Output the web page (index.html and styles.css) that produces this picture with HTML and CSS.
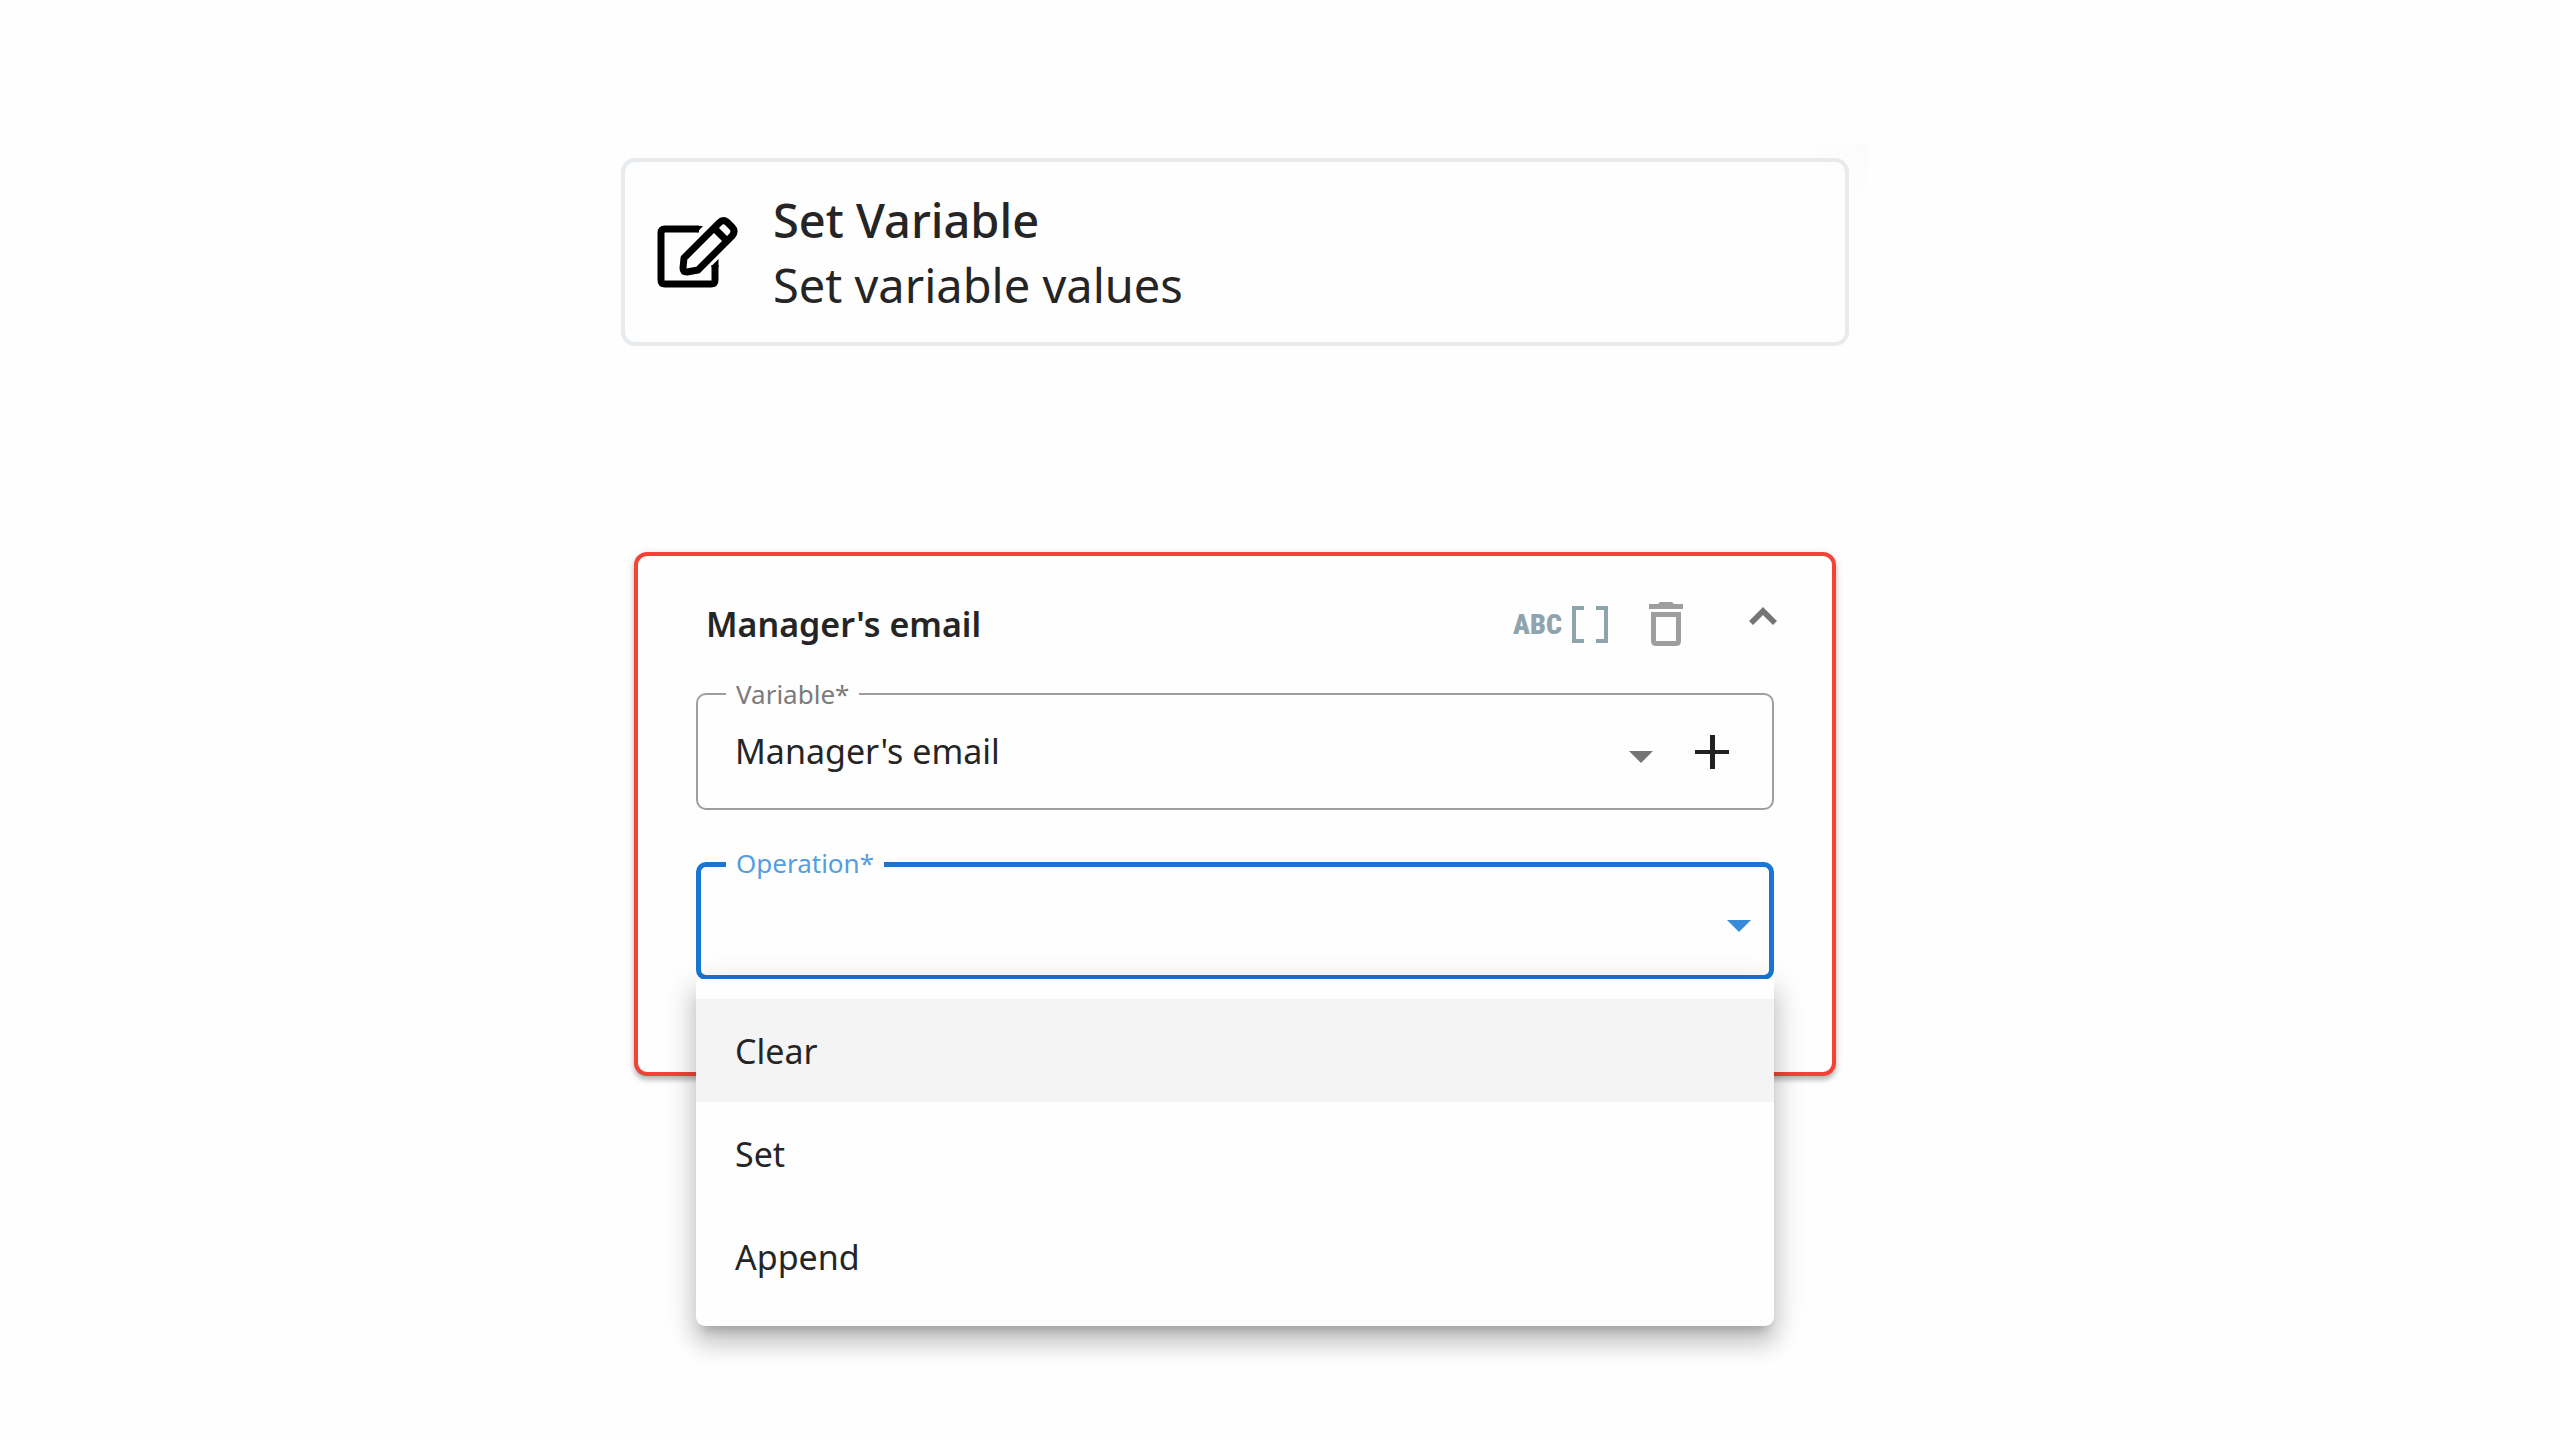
FILE: index.html
```html
<!DOCTYPE html>
<html lang="en">
<head>
    <meta charset="UTF-8">
    <meta name="viewport" content="width=device-width, initial-scale=1">
    <title>Set Variable</title>
    <link rel="stylesheet" href="styles.css">
</head>
<body>
    <main class="page">
        <section class="activity-card">
            <svg class="activity-icon" viewBox="0 0 80 72" aria-hidden="true">
                <path d="M42 12H8Q4 12 4 16V63Q4 67 8 67H54Q58 67 58 63V48" />
                <path class="cut" d="M41 9H46L40 15.500H41ZM54.500 50V49L61.500 42V50Z" />
                <path d="M27 41L62 6Q66 2 70 5L75 10Q79 14 75 19L41 53L30 55Q26 55 26 51Z" />
                <path d="M57 11L69 23" />
            </svg>
            <div class="activity-text">
                <h1>Set Variable</h1>
                <p>Set variable values</p>
            </div>
        </section>

        <form class="variable-card">
            <div class="card-header">
                <h2>Manager's email</h2>
                <span class="type-text">ABC</span>
                <svg class="icon-brackets" viewBox="0 0 36 37" aria-hidden="true">
                    <path d="M12 2H2V35H12M24 2H34V35H24" />
                </svg>
                <button type="button" class="icon-btn delete-btn" aria-label="Delete">
                    <svg width="34" height="44" viewBox="0 0 34 44" aria-hidden="true">
                        <path fill-rule="evenodd" d="M0 2H9L11 0H23L25 2H34V7H0ZM2 10H32V39Q32 44 27 44H7Q2 44 2 39ZM7 15V39H27V15Z" />
                    </svg>
                </button>
                <button type="button" class="icon-btn collapse-btn" aria-label="Collapse">
                    <svg width="28" height="18" viewBox="0 0 28 18" aria-hidden="true">
                        <path d="M14 0L28 14L24 18L14 8L4 18L0 14Z" />
                    </svg>
                </button>
            </div>

            <div class="field">
                <label for="variable">Variable<span>*</span></label>
                <select id="variable" required>
                    <option>Manager's email</option>
                </select>
                <svg class="arrow" width="24" height="12" viewBox="0 0 24 12" aria-hidden="true">
                    <path d="M0 0H24L12 12Z" />
                </svg>
                <button type="button" class="icon-btn add-btn" aria-label="Add variable">
                    <svg width="34" height="34" viewBox="0 0 34 34" aria-hidden="true">
                        <path d="M15 0H20V15H34V19H20V34H15V19H0V15H15Z" />
                    </svg>
                </button>
            </div>

            <div class="field active">
                <label for="operation">Operation<span>*</span></label>
                <select id="operation" required>
                    <option value=""></option>
                </select>
                <svg class="arrow" width="24" height="12" viewBox="0 0 24 12" aria-hidden="true">
                    <path d="M0 0H24L12 12Z" />
                </svg>

                <!-- open dropdown -->
                <div class="menu" role="listbox" aria-label="Operation">
                    <button type="button" class="selected" role="option">Clear</button>
                    <button type="button" role="option">Set</button>
                    <button type="button" role="option">Append</button>
                </div>
            </div>
        </form>
    </main>
</body>
</html>
```

FILE: styles.css
```css
* {
    box-sizing: border-box;
}

body {
    margin: 0;
    min-height: 100vh;
    padding: 158px 90px 0 0;
    background: #fefefe;
    color: #252525;
    font-family: "Noto Sans", sans-serif;
}

h1, h2, p {
    margin: 0;
}

.page {
    max-width: 1228px;
    margin: 0 auto;
}

/* top card */
.activity-card {
    position: relative;
    display: flex;
    align-items: center;
    gap: 36px;
    padding: 26px 32px 24px;
    border: 4px solid #e7ebee;
    border-radius: 14px;
}

/* faint shade behind the corner */
.activity-card::before {
    content: "";
    position: absolute;
    top: -18px;
    right: -22px;
    width: 66px;
    height: 66px;
    background: linear-gradient(to bottom left, #fbfbfb, #fefefe 50%);
    z-index: -1;
}

.activity-icon {
    width: 80px;
    height: 72px;
    overflow: visible;
    fill: none;
    stroke: #000;
    stroke-width: 7;
    stroke-linejoin: round;
}

.activity-icon .cut {
    fill: #000;
    stroke: none;
}

.activity-text h1, .activity-text p {
    font-size: 47px;
    line-height: 65px;
}

.activity-text h1 {
    font-weight: 500;
}

/* variable card */
.variable-card {
    margin: 206px 13px 0;
    padding: 41px 58px 92px;
    border: 4px solid #f44336;
    border-radius: 13px;
    background: #fefefe;
    box-shadow: 0 4px 4px rgba(0, 0, 0, 0.2), 0 2px 10px rgba(0, 0, 0, 0.12);
}

.card-header {
    display: flex;
    align-items: center;
    height: 54px;
    margin-bottom: 42px;
    padding: 0 0 0 10px;
}

.card-header h2 {
    flex: 1;
    font-size: 34px;
    font-weight: 600;
}

.type-text {
    color: #90a4ae;
    font-family: "Liberation Sans Narrow", "Roboto Condensed", Roboto, sans-serif;
    font-size: 28px;
    font-weight: 900;
    margin-right: 10px;
}

.icon-brackets {
    width: 36px;
    height: 37px;
    fill: none;
    stroke: #90a4ae;
    stroke-width: 4;
}

.icon-btn {
    display: flex;
    padding: 0;
    border: 0;
    background: none;
}

.delete-btn {
    margin: 0 66px 0 41px;
    fill: #9e9e9e;
}

.collapse-btn {
    align-self: flex-start;
    margin: 10px -3px 0 0;
    fill: #757575;
}

/* outlined fields */
.field {
    position: relative;
    display: flex;
    align-items: center;
    height: 117px;
    border: 2px solid #9e9e9e;
    border-radius: 10px;
}

.field label {
    position: absolute;
    top: -19px;
    left: 28px;
    padding: 0 10px;
    background: #fefefe;
    color: #7b7b7b;
    font-size: 26px;
    line-height: 36px;
}

.field select {
    flex: 1;
    height: 100%;
    padding: 0 37px 2px;
    border: 0;
    outline: 0;
    background: none;
    color: inherit;
    font: 34px "Noto Sans", sans-serif;
    appearance: none;
}

.arrow {
    margin: 10px 42px 0 0;
    fill: #757575;
}

.add-btn {
    margin-right: 43px;
    fill: #212121;
}

.field.active {
    height: 118px;
    margin-top: 52px;
    border: 5px solid #1976d2;
}

.field.active label {
    top: -22px;
    left: 25px;
    color: #569de0;
}

.active .arrow {
    margin-right: 18px;
    fill: #388adb;
}

.menu {
    position: absolute;
    top: 112px;
    left: -5px;
    right: -5px;
    display: flex;
    flex-direction: column;
    padding: 20px 0 18px;
    border-radius: 0 0 9px 9px;
    background: #fefefe;
    box-shadow: 0 11px 11px -7px rgba(0, 0, 0, 0.2), 0 18px 22px 2px rgba(0, 0, 0, 0.14), 0 7px 31px 4px rgba(0, 0, 0, 0.12);
}

.menu button {
    height: 103px;
    padding: 0 39px;
    border: 0;
    background: none;
    color: inherit;
    font: 34px "Noto Sans", sans-serif;
    text-align: left;
}

.menu .selected {
    background: #f4f4f4;
}
```
